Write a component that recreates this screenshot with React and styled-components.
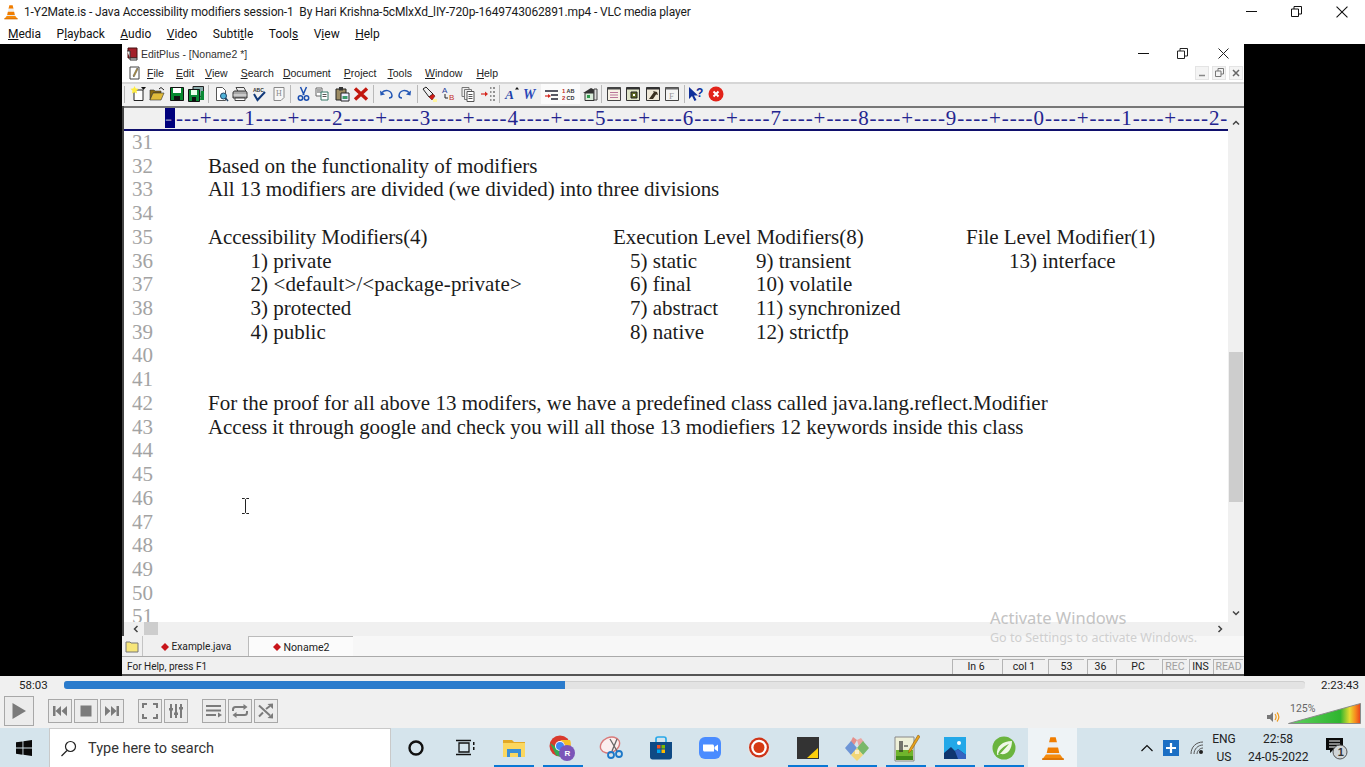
import React from "react";
import styled, { createGlobalStyle } from "styled-components";

const UI_FONT = `Roboto, "Noto Sans", "Liberation Sans", sans-serif`;
const NOTO_FONT = `"Noto Sans", "Open Sans", "Liberation Sans", sans-serif`;
const SMALL_FONT = `"Liberation Sans", Arial, sans-serif`;
const CODE_FONT = `"Liberation Serif", "Times New Roman", serif`;

const GlobalStyle = createGlobalStyle`
  html, body {
    margin: 0;
    padding: 0;
    overflow: hidden;
    background: #fff;
  }
  * { box-sizing: border-box; }
`;

const Page = styled.div`
  position: relative;
  width: 1365px;
  height: 767px;
  display: flex;
  flex-direction: column;
  overflow: hidden;
  font-family: ${UI_FONT};
`;

/* ---------- VLC chrome ---------- */
const TitleBar = styled.div`
  height: 22px;
  display: flex;
  align-items: center;
  padding: 1px 0 0 3px;
  background: #fff;
  color: #1a1a1a;
  font-size: 12px;
`;
const TitleText = styled.span`
  margin-left: 5px;
  flex: 1;
  white-space: pre;
  letter-spacing: -0.13px;
`;
const WinButtons = styled.div`
  display: flex;
  align-items: center;
`;
const WinButton = styled.span`
  display: flex;
  justify-content: center;
  width: ${(p) => p.$w}px;
`;
const MenuBar = styled.div`
  height: 22px;
  display: flex;
  align-items: center;
  gap: 15.500px;
  padding: 1px 0 0 8px;
  background: #fff;
  color: #111;
  font-size: 12px;
`;
const VideoArea = styled.div`
  height: 632px;
  padding: 0 121px 0 122px;
  background: #000;
`;

/* ---------- EditPlus window ---------- */
const EditorWindow = styled.div`
  height: 100%;
  display: flex;
  flex-direction: column;
  background: #fff;
`;
const EpTitle = styled.div`
  height: 19px;
  display: flex;
  align-items: center;
  padding-left: 3px;
  font: 10.5px ${SMALL_FONT};
  color: #333;
`;
const EpTitleText = styled.span`
  margin-left: 2px;
  flex: 1;
`;
const EpMenu = styled.div`
  height: 19px;
  display: flex;
  align-items: center;
  padding-left: 6px;
  font: 10.5px ${SMALL_FONT};
  color: #222;
`;
const EpMenuItem = styled.span`
  margin-left: ${(p) => p.$gap}px;
  white-space: nowrap;
`;
const MdiButtons = styled.div`
  margin-left: auto;
  display: flex;
  gap: 3px;
  padding-right: 1px;
`;
const MdiButton = styled.span`
  width: 14px;
  height: 14px;
  display: flex;
  align-items: center;
  justify-content: center;
  background: #f4f4f4;
  border: 1px solid #e4e4e4;
`;
const Toolbar = styled.div`
  height: 24px;
  display: flex;
  align-items: center;
  padding: 0 0 2px 2px;
  background: #f0f0f0;
  border-top: 2px solid #d6d6d6;
`;
const Grip = styled.span`
  width: 2px;
  height: 17px;
  margin-right: 2.3px;
  border-left: 1px solid #b5b5b5;
`;
const ToolBtn = styled.span`
  width: 19.4px;
  height: 20px;
  display: flex;
  align-items: center;
  justify-content: center;
  background: ${(p) => (p.$pressed ? "#fbfbfb" : "transparent")};
`;
const ToolSep = styled.span`
  width: 1px;
  height: 18px;
  margin: 0 2.2px 0 1.8px;
  background: #b9b9b9;
`;

const BodyRow = styled.div`
  height: 530px;
  display: flex;
`;
const EditorColumn = styled.div`
  flex: 1;
  min-width: 0;
  display: flex;
  flex-direction: column;
  border-left: 2px solid #444;
`;
const Ruler = styled.div`
  height: 25px;
  flex: none;
  padding-left: 41px;
  background: #f0f0f0;
  border-top: 2px solid #777;
  border-bottom: 2px solid #10106c;
  white-space: nowrap;
  font: 21px/20px ${CODE_FONT};
  letter-spacing: 0.94px;
  color: #24248f;
`;
const RulerCursor = styled.span`
  display: inline-block;
  width: 10px;
  margin-right: 1px;
  background: #00007c;
  color: #7a7ab8;
  letter-spacing: 0;
`;
const CodeArea = styled.div`
  position: relative;
  flex: 1;
  min-height: 0;
  overflow: hidden;
  background: #fff;
`;
const CodeRow = styled.div`
  height: 23.72px;
  display: grid;
  grid-template-columns: 84px 42.500px 362.500px 17px 126px 210px 43px 1fr;
  font: 21px/23.72px ${CODE_FONT};
  color: #1b1b1b;
  white-space: nowrap;
`;
const LineNo = styled.span`
  grid-column: 1;
  padding-left: 8px;
  color: #a3a3a3;
`;
const CodeCell = styled.span`
  grid-column: ${(p) => p.$col};
  grid-row: 1;
  letter-spacing: ${(p) => p.$track || 0}px;
`;
const IBeam = styled.svg`
  position: absolute;
  left: 117px;
  top: 367px;
`;
const HScroll = styled.div`
  height: 14px;
  flex: none;
  display: flex;
  align-items: center;
  padding-bottom: 1px;
  background: #f0f0f0;
`;
const HThumb = styled.span`
  width: 14px;
  height: 13px;
  margin-left: 4px;
  background: #cdcdcd;
`;
const HArrow = styled.span`
  display: flex;
  align-items: center;
  margin-left: ${(p) => p.$left || 0}px;
`;
const VScroll = styled.div`
  width: 16px;
  flex: none;
  display: flex;
  flex-direction: column;
  padding-top: 8px;
  background: #f0f0f0;
  border-top: 2px solid #777;
`;
const VThumb = styled.span`
  height: 150px;
  margin: 222px 1px 0;
  background: #cdcdcd;
`;
const VArrow = styled.span`
  height: 14px;
  display: flex;
  align-items: center;
  justify-content: center;
  margin-top: ${(p) => p.$top || 0}px;
`;
const TabsRow = styled.div`
  height: 21px;
  display: flex;
  align-items: stretch;
  background: #f7f7f7;
  border-bottom: 1px solid #aaa;
`;
const FolderCell = styled.span`
  width: 21px;
  display: flex;
  align-items: center;
  padding-left: 3px;
  background: #f0f0f0;
  border-right: 1px solid #c4c4c4;
`;
const Tab = styled.span`
  width: ${(p) => p.$w}px;
  display: flex;
  align-items: center;
  gap: 2.500px;
  padding: 1px 0 0 ${(p) => p.$pad}px;
  font-size: ${(p) => p.$size}px;
  color: #222;
  background: ${(p) => (p.$active ? "#fbfbfb" : "#f0f0f0")};
  border-top: ${(p) => (p.$active ? "1px solid #bbb" : "none")};
  border-left: ${(p) => (p.$active ? "1px solid #bbb" : "none")};
`;
const StatusBar = styled.div`
  height: 19px;
  display: flex;
  align-items: flex-end;
  padding-left: 5px;
  background: #f0f0f0;
  border-bottom: 2px solid #555;
  font-size: 10.500px;
  line-height: 14px;
  color: #222;
`;
const StatusHelp = styled.span`
  flex: 1;
  font-size: 10px;
`;
const StatusPanel = styled.span`
  width: ${(p) => p.$w}px;
  margin-right: ${(p) => p.$gap}px;
  height: 15px;
  text-align: center;
  border-top: 1px solid #b4b4b4;
  border-left: 1px solid #b4b4b4;
  color: ${(p) => (p.$dim ? "#a0a0a0" : "#222")};
`;

/* ---------- Watermark ---------- */
const Watermark = styled.div`
  position: absolute;
  left: 990px;
  top: 608px;
  font-family: ${NOTO_FONT};
  color: #c3c3c3;
  pointer-events: none;
`;
const WatermarkTitle = styled.div`
  font-size: 16.500px;
  line-height: 20px;
`;
const WatermarkSub = styled.div`
  margin-top: 1px;
  font-size: 12.500px;
  line-height: 18px;
  color: #cfcfcf;
`;

/* ---------- VLC controls ---------- */
const Controls = styled.div`
  height: 52px;
  display: flex;
  flex-direction: column;
  background: #f0f0f0;
`;
const SeekRow = styled.div`
  height: 18px;
  display: flex;
  align-items: center;
  font-size: 11.500px;
  color: #222;
`;
const Time = styled.span`
  width: ${(p) => p.$w}px;
  padding-left: ${(p) => p.$pad}px;
`;
const SeekTrack = styled.div`
  flex: 1;
  height: 8px;
  border-radius: 3px;
  background: #e3e3e3;
  box-shadow: inset 0 1px 0 #cfcfcf;
  overflow: hidden;
`;
const SeekFill = styled.div`
  height: 100%;
  background: #2a7bcc;
`;
const ButtonRow = styled.div`
  flex: 1;
  display: flex;
  align-items: flex-start;
  padding: 2px 0 0 4px;
`;
const CtlButton = styled.span`
  width: ${(p) => (p.$big ? 30 : 24)}px;
  height: ${(p) => (p.$big ? 30 : 24)}px;
  margin-top: ${(p) => (p.$big ? 0 : 3)}px;
  margin-left: ${(p) => p.$left ?? 2}px;
  display: flex;
  align-items: center;
  justify-content: center;
  background: #ececec;
  border: 1px solid #a8a8a8;
`;
const VolumeBox = styled.div`
  position: relative;
  margin-left: auto;
  width: 95px;
  height: 28px;
  margin-right: 4px;
  display: flex;
  align-items: flex-end;
  justify-content: space-between;
`;
const VolumeLabel = styled.span`
  position: absolute;
  left: 24px;
  top: 7px;
  font-size: 10.500px;
  line-height: 12px;
  color: #666;
`;

/* ---------- Taskbar ---------- */
const Taskbar = styled.div`
  height: 39px;
  display: flex;
  align-items: stretch;
  background: #d5e4ec;
  color: #111;
`;
const StartCell = styled.span`
  width: 49px;
  display: flex;
  align-items: center;
  justify-content: center;
  padding-right: 1px;
`;
const SearchBox = styled.div`
  width: 342px;
  display: flex;
  align-items: center;
  gap: 11px;
  padding-left: 10px;
  background: #fff;
  border: 1px solid #c9c9c9;
  border-bottom: none;
  font-size: 14.500px;
  color: #333;
`;
const AppCell = styled.span`
  position: relative;
  width: 49px;
  display: flex;
  align-items: center;
  justify-content: center;
  background: ${(p) => (p.$focused ? "#eef3f6" : "transparent")};
  &::after {
    content: "";
    display: ${(p) => (p.$running ? "block" : "none")};
    position: absolute;
    left: 4.500px;
    right: 4.500px;
    bottom: 0;
    height: 2px;
    background: #0a78d4;
  }
`;
const Tray = styled.div`
  flex: 1;
  display: flex;
  align-items: center;
`;
const TrayIcon = styled.span`
  display: flex;
  align-items: center;
  margin-left: ${(p) => p.$left}px;
`;
const TrayText = styled.span`
  width: ${(p) => p.$w}px;
  margin-left: ${(p) => p.$left}px;
  font-size: 12px;
  line-height: 18px;
  text-align: center;
  white-space: nowrap;
  color: #222;
`;

/* ---------- Drawings ---------- */
const Svg = ({ size = 16, w, h, box, children }) => (
  <svg width={w || size} height={h || size} viewBox={box || `0 0 ${size} ${size}`}>
    {children}
  </svg>
);

const VlcCone = ({ size }) => (
  <Svg size={size} box="0 0 24 24">
    <path d="M9.500 2h5l1.200 5H8.300z" fill="#f07d00" />
    <path d="M8.300 7h7.400l1 4.500H7.300z" fill="#eee" />
    <path d="M7.300 11.500h9.400l1.100 5H6.200z" fill="#f07d00" />
    <path d="M6.200 16.500h11.600l.8 2.500H5.400z" fill="#e8e8e8" />
    <path d="M5.500 18h13l3.500 4.500H2z" fill="#f58a0b" />
    <path d="M2 21.500h20V23H2z" fill="#d96f00" />
  </Svg>
);

const MinIcon = ({ w = 11 }) => (
  <svg width={w} height="11" viewBox="0 0 11 11"><path d="M0 5.500h11" stroke="#111" /></svg>
);
const RestoreIcon = ({ color = "#111" }) => (
  <svg width="11" height="11" viewBox="0 0 11 11" fill="none" stroke={color}>
    <path d="M.5 3h7v7.500h-7zM3 3V.5h7.500V8H7.500" />
  </svg>
);
const CloseIcon = ({ color = "#111", s = 11 }) => (
  <svg width={s} height={s} viewBox="0 0 11 11" stroke={color}><path d="M.5.500l10 10M10.500.500l-10 10" /></svg>
);

const Page16 = ({ fill = "#fff" }) => <path d="M3.500 1.500h6l3 3v10h-9z" fill={fill} stroke="#555" />;

const toolIcons = {
  new: (<><path d="M4 4h9v10.500H4z" fill="#fff" stroke="#222" /><path d="M4.500 0l1.200 2.500 2.800.300-2 2 .5 2.700-2.500-1.300-2.500 1.300.5-2.700-2-2 2.800-.300z" fill="#ffec3d" /><path d="M11 1h5l-2.500 3z" fill="#111" /></>),
  open: (<><path d="M1 4h4l1 1h6v2H4l-3 7z" fill="#8a6a10" stroke="#333" strokeWidth=".6" /><path d="M4 7h11l-3 7H1z" fill="#e0bb3a" stroke="#333" strokeWidth=".6" /><path d="M10 3l2-1.500L15 4" stroke="#222" fill="none" /></>),
  save: (<><path d="M1.500 1.500h13v13h-13z" fill="#06892f" stroke="#111" /><path d="M4 2h8v5H4z" fill="#fff" /><path d="M5 10h6v4.500H5z" fill="#111" /></>),
  saveAll: (<><path d="M5 .500h10.500v10H5z" fill="#8aa" stroke="#222" /><path d="M.500 3.500h11v12h-11z" fill="#0a8a35" stroke="#111" /><path d="M3 4h6v5H3z" fill="#e8ffe8" /><path d="M4 11h4v4H4z" fill="#111" /><path d="M13 5h3v9h-4z" fill="#0a8a35" /></>),
  preview: (<><Page16 /><circle cx="10.500" cy="10" r="3" fill="#4fb3d8" stroke="#246" /><path d="M12.500 12l2.500 3" stroke="#246" strokeWidth="1.500" /></>),
  print: (<><path d="M4 1.500h8l2 4H6z" fill="#eee" stroke="#444" /><path d="M1 7c0-1.500 1-2 2-2h10c1 0 2 .500 2 2v5H1z" fill="#a8a8a8" stroke="#333" /><path d="M1.500 9h13" stroke="#eee" /><path d="M3 12h10v2.500H3z" fill="#fff" stroke="#444" /></>),
  spell: (<><text x="2" y="5.500" fontSize="5" fontFamily={SMALL_FONT} fontWeight="700" fill="#333">ABC</text><path d="M3 8l3.500 6L14 6" fill="none" stroke="#123a7a" strokeWidth="2" /></>),
  html: (<><path d="M3 1.500h10v10l-3 3H3z" fill="#f7f7f7" stroke="#888" /><text x="5" y="10" fontSize="8" fontFamily={CODE_FONT} fill="#888">H</text></>),
  cut: (<><path d="M5.500 1l3.500 8M11.500 1L8 9" stroke="#1c4fb0" strokeWidth="1.500" /><circle cx="5.500" cy="12" r="2.200" fill="none" stroke="#1c4fb0" strokeWidth="1.500" /><circle cx="11.500" cy="12" r="2.200" fill="none" stroke="#1c4fb0" strokeWidth="1.500" /></>),
  copy: (<><path d="M2 2h6v8H2z" fill="#fff" stroke="#666" /><path d="M3 4h4M3 6h4" stroke="#555" /><path d="M7 6h7v8H7z" fill="#fff" stroke="#376" /><path d="M8.500 8.500h4M8.500 10.500h4" stroke="#555" /></>),
  paste: (<><path d="M2 3h10v11H2z" fill="#9c8b62" stroke="#222" /><path d="M5 1h4v3.500H5z" fill="#333" /><path d="M7 7h8v8H7z" fill="#eef" stroke="#222" /><path d="M8.500 10h5v3h-5z" fill="#3a9a6a" /></>),
  del: (<path d="M2 2.500l12 11M14 2.500l-12 11" stroke="#c2180f" strokeWidth="3.400" />),
  undo: (<><path d="M4 6.500c3-3 9-3 10 3 0 1-1 2.500-3 2.500" fill="none" stroke="#2357b5" strokeWidth="1.500" /><path d="M2 4.500l.5 5 4.500-1z" fill="#2357b5" /></>),
  redo: (<><path d="M12 6.500c-3-3-9-3-10 3 0 1 1 2.500 3 2.500" fill="none" stroke="#2357b5" strokeWidth="1.500" /><path d="M14 4.500l-.5 5-4.500-1z" fill="#2357b5" /></>),
  find: (<><path d="M2 3l3-2 7 7-4 3z" fill="#eee" stroke="#222" /><path d="M8 11l4-3 2 2-3 4z" fill="#d21c14" stroke="#611" strokeWidth=".6" /><path d="M12 13h4v3h-4z" fill="#fff6a0" /></>),
  replace: (<><text x="1" y="7" fontSize="8" fontFamily={SMALL_FONT} fill="#1f3e9a">A</text><path d="M4 8v4h3" stroke="#222" fill="none" /><text x="8" y="14" fontSize="8" fontFamily={SMALL_FONT} fill="#c4302b">B</text></>),
  pages: (<><path d="M2 1.500h7v9H2z" fill="#eee" stroke="#777" /><path d="M4.500 3.500h7v10h-7z" fill="#eee" stroke="#777" /><path d="M7 5.500h7v10H7z" fill="#fff" stroke="#555" /><path d="M8.500 8.500h4M8.500 10.500h4M8.500 12.500h4" stroke="#555" /></>),
  indent: (<><path d="M1 8h5" stroke="#d5261d" strokeWidth="1.200" /><path d="M5 5.500L8 8l-3 2.500z" fill="#d5261d" /><path d="M10 2h1.500M13 2h2M10 6h1.500M13 6h2M10 10h1.500M13 10h2M10 14h1.500M13 14h2" stroke="#333" /></>),
  fontA: (<><text x="1" y="12.500" fontSize="13.500" fontFamily={CODE_FONT} fontWeight="700" fontStyle="italic" fill="#1c3fa8">A</text><path d="M11 3.500l2-2.500 2 2.500z" fill="#111" /></>),
  fontW: (<text x="0" y="12.500" fontSize="14" fontFamily={CODE_FONT} fontWeight="700" fontStyle="italic" fill="#2a48b8">W</text>),
  wrap: (<><path d="M2 5h13M8 9h7M8 13h7" stroke="#223" strokeWidth="1.400" /><path d="M2 10h4" stroke="#d5261d" strokeWidth="1.200" /><path d="M5 8l3 2-3 2z" fill="#d5261d" /></>),
  nums: (<><text x="0" y="7" fontSize="6" fontFamily={SMALL_FONT} fontWeight="700" fill="#c4302b">1</text><text x="4.500" y="7" fontSize="5.500" fontFamily={SMALL_FONT} fontWeight="700" fill="#333">AB</text><text x="0" y="14" fontSize="6" fontFamily={SMALL_FONT} fontWeight="700" fill="#c4302b">2</text><text x="4.500" y="14" fontSize="5.500" fontFamily={SMALL_FONT} fontWeight="700" fill="#333">CD</text></>),
  house: (<><path d="M1 7l8-5 6 3v2z" fill="#333" /><path d="M3 7h9v7.500H3z" fill="#d8ead8" stroke="#333" /><path d="M5 9h3v3H5z" fill="#2c9a4a" /><path d="M12 3h3v11h-3z" fill="#ddd" stroke="#444" /></>),
  win1: (<><path d="M1.500 1.500h13v13h-13z" fill="#f8f3e6" stroke="#444" /><path d="M1.500 1.500h13v2h-13z" fill="#444" /><path d="M4 6.500h8M4 9h8M4 11.500h8" stroke="#b79" /></>),
  win2: (<><path d="M1.500 1.500h13v13h-13z" fill="#dfe5c8" stroke="#333" /><path d="M1.500 1.500h13v2h-13z" fill="#333" /><path d="M6 6h6v6H6z" fill="#5d6b22" stroke="#222" /><path d="M8 8h2v2H8z" fill="#fff" /></>),
  win3: (<><path d="M1.500 1.500h13v13h-13z" fill="#efe8d8" stroke="#333" /><path d="M1.500 1.500h13v2h-13z" fill="#333" /><path d="M4 13l5-7 3 1-4 6zM8 5l4 1 1 3-3-1z" fill="#3a3020" /></>),
  win4: (<><path d="M1.500 1.500h13v13h-13z" fill="#f4f4f4" stroke="#444" /><path d="M1.500 1.500h13v2h-13z" fill="#666" /><text x="5" y="13" fontSize="9" fontFamily={CODE_FONT} fill="#999">F</text></>),
  help: (<><path d="M1 1l0 12 3-3 2.500 5 2-1-2.500-4.500h4z" fill="#0f2f9a" /><text x="8" y="11" fontSize="12" fontFamily={SMALL_FONT} fontWeight="700" fill="#0f2f9a">?</text></>),
  stop: (<><circle cx="8" cy="8" r="7.500" fill="#e2231a" /><path d="M5.500 5.500l5 5M10.500 5.500l-5 5" stroke="#fff" strokeWidth="2" /></>),
};

const toolGroups = [
  ["new", "open", "save", "saveAll"],
  ["preview", "print", "spell", "html"],
  ["cut", "copy", "paste", "del"],
  ["undo", "redo"],
  ["find", "replace", "pages", "indent"],
  ["fontA", "fontW", "wrap", "nums", "house"],
  ["win1", "win2", "win3", "win4"],
  ["help", "stop"],
];
const pressedTools = ["wrap", "nums"];

const ctlGrey = "#7b7b7b";
const controlIcons = {
  play: (<Svg size={16}><path d="M1.500 0v16L15 8z" fill={ctlGrey} /></Svg>),
  prev: (<Svg size={16}><path d="M1 3h2.500v10H1zM9 3v10L3.500 8zM15 3v10L9.500 8z" fill={ctlGrey} /></Svg>),
  stop: (<Svg size={16}><path d="M2.500 2.500h11v11h-11z" fill={ctlGrey} /></Svg>),
  next: (<Svg size={16}><path d="M15 3h-2.500v10H15zM7 3v10l5.500-5zM1 3v10l5.500-5z" fill={ctlGrey} /></Svg>),
  full: (<Svg size={16}><path d="M1 5V1h4M11 1h4v4M15 11v4h-4M5 15H1v-4" fill="none" stroke={ctlGrey} strokeWidth="2" /></Svg>),
  ext: (<Svg size={16}><path d="M3 1v14M8 1v14M13 1v14" stroke={ctlGrey} strokeWidth="2" /><path d="M1 5h4v2.500H1zM6 9.500h4V12H6zM11 4h4v2.500h-4z" fill={ctlGrey} /></Svg>),
  list: (<Svg size={16}><path d="M0 3h15M0 7.500h15M0 12h10" stroke={ctlGrey} strokeWidth="2" /><path d="M12 9.500v5l4-2.500z" fill={ctlGrey} /></Svg>),
  loop: (<Svg size={16}><path d="M1 8V6.500C1 5 2 4 3.500 4H12M15 8v1.500c0 1.500-1 2.500-2.500 2.500H4" fill="none" stroke={ctlGrey} strokeWidth="2" /><path d="M11.500 1v6L15.500 4zM4.500 9v6L.5 12z" fill={ctlGrey} /></Svg>),
  shuffle: (<Svg size={16}><path d="M1 2.500l11 10M1 13.500l4-4M8 6l4-3" fill="none" stroke={ctlGrey} strokeWidth="2" /><path d="M15 .5v5.500L9.500 1zM15 15.500V10l-5.500 5z" fill={ctlGrey} /></Svg>),
};

const FolderIcon = () => (
  <Svg size={24}>
    <path d="M1 4h9l2 2h11v4H1z" fill="#e2a826" />
    <path d="M1 7h22v14H1z" fill="#fbd75f" />
    <path d="M5 13h14v8h-3v-4H8v4H5z" fill="#3b8fd6" />
  </Svg>
);
const taskApps = [
  { key: "cortana", icon: <Svg size={18}><circle cx="9" cy="9" r="6.500" fill="none" stroke="#111" strokeWidth="2.400" /></Svg> },
  { key: "taskview", icon: <Svg size={20}><path d="M4 5h10v9H4zM1 2.500h15M1 16.500h15" fill="none" stroke="#111" strokeWidth="1.300" /><path d="M18 4h1.500v3H18zM18 9h1.500v3H18z" fill="#111" /></Svg> },
  { key: "explorer", running: true, icon: <FolderIcon /> },
  { key: "chrome", running: true, icon: (
    <Svg size={28}>
      <circle cx="11" cy="12" r="10.500" fill="#d93a2d" />
      <path d="M1 9l6 12c2 1.500 5 2 7 1l3-9H7z" fill="#34a853" />
      <path d="M11 6h10c1.500 3 1 7-2 10l-5 6 2-12z" fill="#f6bf26" />
      <circle cx="11" cy="12" r="5" fill="#fff" /><circle cx="11" cy="12" r="4" fill="#4285f4" />
      <circle cx="18" cy="19" r="8" fill="#7b55b8" />
      <text x="15.500" y="22" fontSize="8" fontWeight="700" fontFamily={SMALL_FONT} fill="#fff">R</text>
    </Svg>) },
  { key: "snip", icon: (
    <Svg size={26}>
      <ellipse cx="11" cy="10" rx="10" ry="7.500" transform="rotate(-25 11 10)" fill="#fbeeee" stroke="#d97a7a" strokeWidth="1.400" />
      <path d="M11 4l7 12M18 4l-5 12" stroke="#666" strokeWidth="1.300" />
      <circle cx="12" cy="20" r="3" fill="none" stroke="#1d78c8" strokeWidth="1.800" />
      <circle cx="20" cy="19" r="3" fill="none" stroke="#1d78c8" strokeWidth="1.800" />
    </Svg>) },
  { key: "store", icon: (
    <Svg size={24}>
      <path d="M7 6V3c0-1 1-2 2-2h6c1 0 2 1 2 2v3" fill="none" stroke="#29a8e8" strokeWidth="1.700" />
      <path d="M1 6h22v15c0 1.500-1 2.500-2.500 2.500h-17C2 23.500 1 22.500 1 21z" fill="#0f4a85" />
      <path d="M8 9h3.500v3.500H8z" fill="#f25022" /><path d="M12.500 9H16v3.500h-3.500z" fill="#7fba00" />
      <path d="M8 13.500h3.500V17H8z" fill="#00a4ef" /><path d="M12.500 13.500H16V17h-3.500z" fill="#ffb900" />
    </Svg>) },
  { key: "zoom", icon: (
    <Svg size={22}>
      <rect width="22" height="22" rx="6" fill="#4a8cff" />
      <path d="M4 7.500h9.500c.8 0 1.500.7 1.500 1.500v5.500H5.500C4.700 14.500 4 13.800 4 13z" fill="#fff" />
      <path d="M15.500 10l3.500-2.500v7L15.500 12z" fill="#fff" />
    </Svg>) },
  { key: "record", icon: (
    <Svg size={24}>
      <circle cx="12" cy="12.500" r="11" fill="#e4e4e4" />
      <circle cx="12" cy="11.500" r="10" fill="#cf3418" />
      <circle cx="12" cy="11.500" r="7.800" fill="#fff" />
      <circle cx="12" cy="11.500" r="5.500" fill="#d63a12" />
    </Svg>) },
  { key: "sticky", running: true, icon: (
    <Svg size={22}><rect width="22" height="22" fill="#333" /><path d="M21 11v10H10z" fill="#fccf0b" /></Svg>) },
  { key: "diamond", running: true, icon: (
    <Svg size={26}>
      <path d="M9 2l4 3-4 7-3-4z" fill="#e58f8a" /><path d="M13 5l4-2 3 4-5 5z" fill="#e9a7a3" />
      <path d="M1 13l6-7 6 7-6 7z" fill="#6d95d6" /><path d="M13 13l6-7 6 7-6 7z" fill="#79b86a" />
      <path d="M13 13l6 7-6 6-6-6z" fill="#f2d677" /><path d="M11 15h4v4h-4z" fill="#fff" opacity=".6" />
    </Svg>) },
  { key: "notepad", running: true, icon: (
    <Svg size={28}>
      <path d="M3 3h19v24H3z" fill="#eef0d8" stroke="#888" />
      <path d="M4 16h17v10H4z" fill="#6fb52c" />
      <path d="M4 22h17v4H4z" fill="#3f8a16" />
      <path d="M8 7v11M10 7v11" stroke="#222" strokeWidth="1.200" /><path d="M12 12h4" stroke="#222" />
      <path d="M26 1l2 1.500L19 17l-2.500 2 .5-3z" fill="#e8a21a" stroke="#7a4d00" strokeWidth=".5" />
    </Svg>) },
  { key: "photos", running: true, icon: (
    <Svg size={22}>
      <rect width="22" height="22" fill="#23a8e8" />
      <circle cx="15" cy="6" r="2" fill="#fff" />
      <path d="M0 22V16l7-6 4 4 3-2 8 6v4z" fill="#10366f" />
      <path d="M11 14l3-2 8 6v4H14z" fill="#3563c0" />
    </Svg>) },
  { key: "spring", running: true, icon: (
    <Svg size={24}>
      <circle cx="12" cy="12" r="11.500" fill="#6ab43e" />
      <path d="M5 19C4 10 11 5 20 5c0 9-5 14-11 13-1.500 0-3 .5-4 1z" fill="#eef7e6" />
      <path d="M6 18c2-5 6-8 11-10-3 3-6 7-9 10z" fill="#6ab43e" />
    </Svg>) },
  { key: "vlc", running: false, focused: true, icon: <VlcCone size={26} /> },
];

/* ---------- Data ---------- */
// third value of a cell is letter-spacing, the video's hinted Times runs a bit off Liberation
const codeLines = [
  [31],
  [32, [2, "Based on the functionality of modifiers"]],
  [33, [2, "All 13 modifiers are divided (we divided) into three divisions", -0.08]],
  [34],
  [35, [2, "Accessibility Modifiers(4)", -0.11], [4, "Execution Level Modifiers(8)"], [7, "File Level Modifier(1)", -0.04]],
  [36, [3, "1) private"], [5, "5) static"], [6, "9) transient"], [8, "13) interface"]],
  [37, [3, "2) <default>/<package-private>", 0.1], [5, "6) final"], [6, "10) volatile"]],
  [38, [3, "3) protected"], [5, "7) abstract"], [6, "11) synchronized"]],
  [39, [3, "4) public"], [5, "8) native"], [6, "12) strictfp"]],
  [40],
  [41],
  [42, [2, "For the proof for all above 13 modifers, we have a predefined class called java.lang.reflect.Modifier"]],
  [43, [2, "Access it through google and check you will all those 13 modiefiers 12 keywords inside this class", -0.06]],
  [44], [45], [46], [47], [48], [49], [50], [51],
];

const epMenu = [
  ["F", "ile", 5], ["E", "dit", 12], ["V", "iew", 11], ["S", "earch", 13], ["D", "ocument", 9],
  ["P", "roject", 13], ["T", "ools", 11], ["W", "indow", 13], ["H", "elp", 14],
];

const statusPanels = [
  { label: "In 6", w: 47, gap: 3 },
  { label: "col 1", w: 43, gap: 3 },
  { label: "53", w: 36, gap: 3 },
  { label: "36", w: 26, gap: 3 },
  { label: "PC", w: 43, gap: 3 },
  { label: "REC", w: 25, gap: 2, dim: true },
  { label: "INS", w: 22, gap: 2 },
  { label: "READ", w: 30, gap: 1, dim: true },
];

const elapsed = 58 * 60 + 3;
const total = 2 * 3600 + 23 * 60 + 43;

const Diamond = () => (
  <Svg size={8}><path d="M4 0l4 4-4 4-4-4z" fill="#c8141a" /></Svg>
);
const ScrollChevron = ({ d }) => (
  <svg width="8" height="8" viewBox="0 0 8 8"><path d={d} fill="none" stroke="#444" strokeWidth="1.500" /></svg>
);

export default function App() {
  const rulerText = Array.from({ length: 12 }, (_, i) => `----+----${(i + 1) % 10}`).join("").slice(1) + "-";

  return (
    <Page>
      <GlobalStyle />
      <TitleBar>
        <VlcCone size={16} />
        <TitleText>1-Y2Mate.is - Java Accessibility modifiers session-1  By Hari Krishna-5cMlxXd_lIY-720p-1649743062891.mp4 - VLC media player</TitleText>
        <WinButtons>
          <WinButton $w={46}><MinIcon /></WinButton>
          <WinButton $w={45}><RestoreIcon /></WinButton>
          <WinButton $w={46}><CloseIcon s={12} /></WinButton>
        </WinButtons>
      </TitleBar>
      <MenuBar>
        <span><u>M</u>edia</span>
        <span>P<u>l</u>ayback</span>
        <span><u>A</u>udio</span>
        <span><u>V</u>ideo</span>
        <span>Subti<u>t</u>le</span>
        <span>Tool<u>s</u></span>
        <span>V<u>i</u>ew</span>
        <span><u>H</u>elp</span>
      </MenuBar>

      <VideoArea>
        <EditorWindow>
          <EpTitle>
            <Svg size={14}>
              <path d="M3 1h9v10H3z" fill="#a3202a" stroke="#411" />
              <path d="M2 4h3v9h7v-2H5" fill="#eee" stroke="#333" />
            </Svg>
            <EpTitleText>EditPlus - [Noname2 *]</EpTitleText>
            <WinButtons>
              <WinButton $w={40}><MinIcon /></WinButton>
              <WinButton $w={39}><RestoreIcon color="#222" /></WinButton>
              <WinButton $w={42}><CloseIcon color="#222" /></WinButton>
            </WinButtons>
          </EpTitle>
          <EpMenu>
            <Svg size={14}>
              <path d="M2 1h9v12H2z" fill="#fff" stroke="#444" />
              <path d="M9 2L5 10l1 1 4-8z" fill="#caa23a" stroke="#333" strokeWidth=".5" />
            </Svg>
            {epMenu.map(([first, rest, gap]) => (
              <EpMenuItem key={first + rest} $gap={gap}><u>{first}</u>{rest}</EpMenuItem>
            ))}
            <MdiButtons>
              <MdiButton><svg width="8" height="8" viewBox="0 0 8 8"><path d="M1 6.500h6" stroke="#888" strokeWidth="1.500" /></svg></MdiButton>
              <MdiButton><svg width="9" height="9" viewBox="0 0 9 9" fill="none" stroke="#777"><path d="M.5 3h5.500v5.500H.5zM3 3V.5h5.500V6H6" /></svg></MdiButton>
              <MdiButton><svg width="8" height="8" viewBox="0 0 8 8" stroke="#666" strokeWidth="1.500"><path d="M1 1l6 6M7 1L1 7" /></svg></MdiButton>
            </MdiButtons>
          </EpMenu>
          <Toolbar>
            <Grip />
            {toolGroups.map((group, i) => (
              <React.Fragment key={group[0]}>
                {group.map((name) => (
                  <ToolBtn key={name} $pressed={pressedTools.includes(name)}>
                    <Svg size={16}>{toolIcons[name]}</Svg>
                  </ToolBtn>
                ))}
                {i < toolGroups.length - 1 && <ToolSep />}
              </React.Fragment>
            ))}
          </Toolbar>

          <BodyRow>
            <EditorColumn>
              <Ruler><RulerCursor>-</RulerCursor>{rulerText}</Ruler>
              <CodeArea>
                {codeLines.map(([no, ...cells]) => (
                  <CodeRow key={no}>
                    <LineNo>{no}</LineNo>
                    {cells.map(([col, text, track]) => (
                      <CodeCell key={col} $col={col} $track={track}>{text}</CodeCell>
                    ))}
                  </CodeRow>
                ))}
                <IBeam width="9" height="16" viewBox="0 0 9 16">
                  <path d="M1 .5h2.500L4.500 1.500 5.500.5H8M4.500 1.500v13M1 15.500h2.500l1-1 1 1H8" fill="none" stroke="#222" />
                </IBeam>
              </CodeArea>
              <HScroll>
                <HArrow $left={8}><ScrollChevron d="M5.500 1l-3 3 3 3" /></HArrow>
                <HThumb />
                <HArrow $left={1058}><ScrollChevron d="M2.500 1l3 3-3 3" /></HArrow>
              </HScroll>
            </EditorColumn>
            <VScroll>
              <VArrow><ScrollChevron d="M1 5.500l3-3 3 3" /></VArrow>
              <VThumb />
              <VArrow $top={104}><ScrollChevron d="M1 2.500l3 3 3-3" /></VArrow>
            </VScroll>
          </BodyRow>

          <TabsRow>
            <FolderCell>
              <Svg size={14}>
                <path d="M1 3h4l1 1h7v9H1z" fill="#f7e67a" stroke="#777" />
              </Svg>
            </FolderCell>
            <Tab $w={105} $pad={18} $size={10.2}><Diamond />Example.java</Tab>
            <Tab $w={105} $pad={24} $size={10.6} $active><Diamond />Noname2</Tab>
          </TabsRow>
          <StatusBar>
            <StatusHelp>For Help, press F1</StatusHelp>
            {statusPanels.map((p) => (
              <StatusPanel key={p.label} $w={p.w} $gap={p.gap} $dim={p.dim}>{p.label}</StatusPanel>
            ))}
          </StatusBar>
        </EditorWindow>
      </VideoArea>

      <Controls>
        <SeekRow>
          <Time $w={64} $pad={19}>58:03</Time>
          <SeekTrack>
            <SeekFill style={{ width: `${(elapsed / total) * 100}%` }} />
          </SeekTrack>
          <Time $w={60} $pad={16}>2:23:43</Time>
        </SeekRow>
        <ButtonRow>
          <CtlButton $big $left={0}>{controlIcons.play}</CtlButton>
          <CtlButton $left={14}>{controlIcons.prev}</CtlButton>
          <CtlButton>{controlIcons.stop}</CtlButton>
          <CtlButton>{controlIcons.next}</CtlButton>
          <CtlButton $left={14}>{controlIcons.full}</CtlButton>
          <CtlButton>{controlIcons.ext}</CtlButton>
          <CtlButton $left={14}>{controlIcons.list}</CtlButton>
          <CtlButton>{controlIcons.loop}</CtlButton>
          <CtlButton>{controlIcons.shuffle}</CtlButton>
          <VolumeBox>
            <Svg size={14}>
              <path d="M1 5h3l3-3v10L4 9H1z" fill="#777" />
              <path d="M9 4c1.500 2 1.500 4 0 6M11 2.500c2.500 3 2.500 6 0 9" fill="none" stroke="#f09a1a" strokeWidth="1.200" />
            </Svg>
            <VolumeLabel>125%</VolumeLabel>
            <svg width="73" height="21" viewBox="0 0 73 21">
              <defs>
                <linearGradient id="vol" x1="0" x2="1" y1="0" y2="0">
                  <stop offset="0" stopColor="#5fd05f" />
                  <stop offset=".72" stopColor="#2fb52f" />
                  <stop offset=".85" stopColor="#e8dc30" />
                  <stop offset=".93" stopColor="#f78a1e" />
                  <stop offset="1" stopColor="#e8401c" />
                </linearGradient>
              </defs>
              <path d="M.5 20.500L72.500.5v20z" fill="url(#vol)" stroke="#8a8a8a" />
            </svg>
          </VolumeBox>
        </ButtonRow>
      </Controls>

      <Taskbar>
        <StartCell>
          <Svg size={16}>
            <path d="M0 2.300l6.500-.9v6.200H0zM7.400 1.300L16 0v7.600H7.400zM0 8.500h6.500v6.200L0 13.800zM7.400 8.500H16V16l-8.600-1.200z" fill="#0a0a0a" />
          </Svg>
        </StartCell>
        <SearchBox>
          <Svg size={17}>
            <circle cx="10.500" cy="6.500" r="5" fill="none" stroke="#222" strokeWidth="1.200" />
            <path d="M7 10.500L1.500 16" stroke="#222" strokeWidth="1.200" />
          </Svg>
          Type here to search
        </SearchBox>
        {taskApps.map((app) => (
          <AppCell key={app.key} $running={app.running} $focused={app.focused}>{app.icon}</AppCell>
        ))}
        <Tray>
          <TrayIcon $left={64}>
            <svg width="12" height="8" viewBox="0 0 12 8"><path d="M.5 7L6 1.500 11.500 7" fill="none" stroke="#111" strokeWidth="1.200" /></svg>
          </TrayIcon>
          <TrayIcon $left={10}>
            <Svg size={16}>
              <rect width="16" height="16" fill="#1c6fc4" />
              <path d="M8 3v10M3 8h10" stroke="#fff" strokeWidth="2.200" />
            </Svg>
          </TrayIcon>
          <TrayIcon $left={11}>
            <Svg size={14}>
              <path d="M1 13C1 6 6 1 13 1M4 13c0-5 4-9 9-9M7 13c0-3 3-6 6-6" fill="none" stroke="#555" strokeWidth="1" />
              <circle cx="11" cy="11" r="2" fill="#222" />
            </Svg>
          </TrayIcon>
          <TrayText $w={26} $left={7}>ENG<br />US</TrayText>
          <TrayText $w={60} $left={11}>22:58<br />24-05-2022</TrayText>
          <TrayIcon $left={17}>
            <Svg size={24}>
              <path d="M1 2h17v12H8l-3 3v-3H1z" fill="#0a0a0a" />
              <path d="M4 5h11M4 8h11M4 11h8" stroke="#fff" />
              <circle cx="15" cy="16" r="7" fill="#d0d5d8" stroke="#555" />
              <text x="12.800" y="20" fontSize="11" fontWeight="700" fontFamily={SMALL_FONT} fill="#333">1</text>
            </Svg>
          </TrayIcon>
        </Tray>
      </Taskbar>

      <Watermark>
        <WatermarkTitle>Activate Windows</WatermarkTitle>
        <WatermarkSub>Go to Settings to activate Windows.</WatermarkSub>
      </Watermark>
    </Page>
  );
}
